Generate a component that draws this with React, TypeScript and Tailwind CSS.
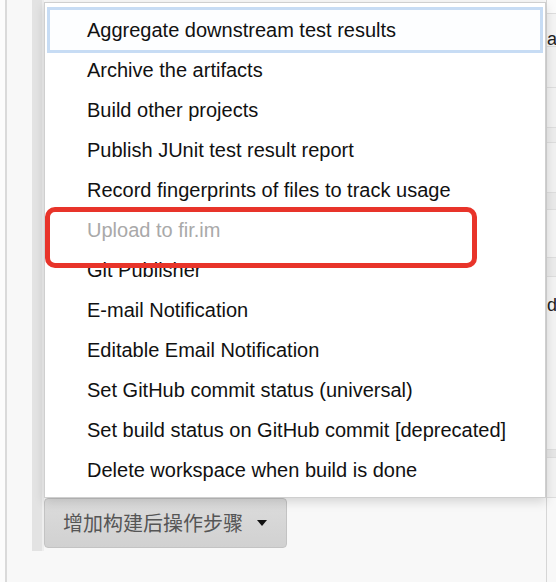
import React from 'react'

// Post-build step dropdown (Jenkins style)
const steps = [
  { label: 'Aggregate downstream test results', active: true },
  { label: 'Archive the artifacts' },
  { label: 'Build other projects' },
  { label: 'Publish JUnit test result report' },
  { label: 'Record fingerprints of files to track usage' },
  { label: 'Upload to fir.im', disabled: true },
  { label: 'Git Publisher' },
  { label: 'E-mail Notification' },
  { label: 'Editable Email Notification' },
  { label: 'Set GitHub commit status (universal)' },
  { label: 'Set build status on GitHub commit [deprecated]' },
  { label: 'Delete workspace when build is done' },
]

// rows of the table that peeks out on the right, behind the menu
const sideRows = [
  { h: 14, bg: 'bg-[#fbfbfb]' },
  { h: 33, bg: 'bg-[#f4f4f4]', text: 'al', pad: 'pt-[16px]' },
  { h: 41, bg: 'bg-[#f1f1f1]' },
  { h: 40, bg: 'bg-[#f1f1f1]' },
  { h: 15, bg: 'bg-[#ececec]' },
  { h: 50, bg: 'bg-[#f1f1f1]' },
  { h: 17, bg: 'bg-[#e9e9e9]' },
  { h: 48, bg: 'bg-[#f3f3f3]' },
  { h: 19, bg: 'bg-[#ebebeb]' },
  { h: 173, bg: 'bg-[#f3f3f3]', text: 'de', pad: 'pt-[19px]' },
  { h: 8, bg: 'bg-[#e6e6e6]' },
  { h: 40, bg: 'bg-[#f2f2f2]' },
]

export default function App() {
  return (
    <div className="relative flex w-[556px] h-[582px] overflow-hidden bg-[#f8f8f8] font-['Liberation_Sans',Arial,sans-serif]">
      <div className="w-[5px] bg-[#fcfcfc]" />
      <div className="w-[2px] bg-[#dadada]" />
      <div className="w-[25px]" />
      <div className="w-[12px] h-[551px] bg-[#e3e3e3] border-r-2 border-[#eeeeee]" />

      <div className="w-[502px] flex flex-col">
        <div className="relative z-10 mt-[2px] bg-white border border-[#cfcfcf] pt-[7px] pb-[7px] shadow-[0_4px_10px_rgba(0,0,0,0.14)]">
          {steps.map((s) => (
            <div
              key={s.label}
              className={
                s.active
                  ? 'h-10 mx-[5px] pl-[37px] flex items-center text-[20px] text-[#111] bg-[#fdfeff] shadow-[0_0_0_3px_#c7dcf4]'
                  : s.disabled
                    ? 'h-10 mx-[5px] pl-[37px] flex items-center text-[20px] text-[#a9a9a9]'
                    : 'h-10 mx-[5px] pl-[37px] flex items-center text-[20px] text-[#111]'
              }
            >
              {s.label}
            </div>
          ))}
        </div>

        <button className="w-[243px] h-[50px] flex items-center pl-[18px] rounded-[4px] border border-[#c3c3c3] bg-gradient-to-b from-[#dcdcdc] to-[#d1d1d1] text-[20px] text-[#555] font-['Noto_Sans_CJK_SC',sans-serif]">
          增加构建后操作步骤
          <span className="ml-[14px] w-0 h-0 border-l-[5px] border-r-[5px] border-t-[6px] border-l-transparent border-r-transparent border-t-[#111]" />
        </button>
      </div>

      <div className="w-[10px] flex flex-col border-l border-[#d6d6d6]">
        {sideRows.map((r, i) => (
          <div
            key={i}
            style={{ height: r.h }}
            className={`${r.bg} ${r.pad ?? ''} border-b border-[#dddddd] overflow-hidden text-[18px] text-[#222] leading-none whitespace-nowrap`}
          >
            {r.text}
          </div>
        ))}
      </div>

      <div className="absolute z-20 left-[45px] top-[207px] w-[432px] h-[61px] border-[5px] border-[#e8342a] rounded-[10px]" />
    </div>
  )
}
